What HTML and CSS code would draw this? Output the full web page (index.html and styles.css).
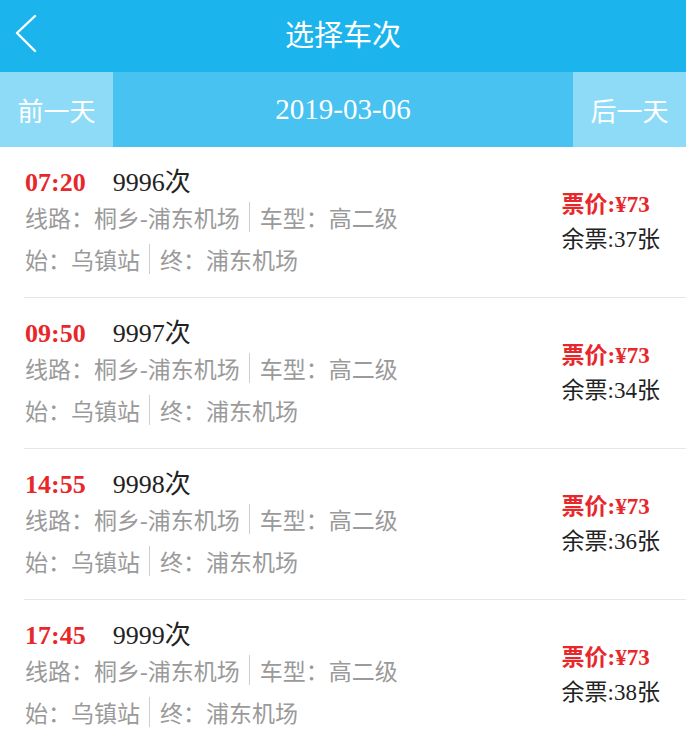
FILE: index.html
```html
<!DOCTYPE html>
<html lang="zh-CN">
<head>
    <meta charset="UTF-8">
    <meta name="viewport" content="width=device-width, initial-scale=1.0">
    <title>选择车次</title>
    <link rel="stylesheet" href="styles.css">
</head>
<body>
    <header class="topbar">
        <a class="back" href="#">
            <svg width="24" height="40" viewBox="0 0 24 40">
                <polyline points="20,1 2,18 20,36" fill="none" stroke="#fff" stroke-width="2.4" stroke-linecap="round" stroke-linejoin="round"/>
            </svg>
        </a>
        <h1 class="title">选择车次</h1>
    </header>

    <div class="datebar">
        <button class="day-btn">前一天</button>
        <div class="date">2019-03-06</div>
        <button class="day-btn">后一天</button>
    </div>

    <ul class="trips">
        <li class="trip">
            <div class="info">
                <div class="line-main"><span class="time">07:20</span><span class="no">9996次</span></div>
                <div class="line-sub">线路：桐乡-浦东机场<i class="sep"></i>车型：高二级</div>
                <div class="line-sub line-last">始：乌镇站<i class="sep"></i>终：浦东机场</div>
            </div>
            <div class="tickets">
                <div class="price">票价:¥73</div>
                <div class="left">余票:37张</div>
            </div>
        </li>
        <li class="trip">
            <div class="info">
                <div class="line-main"><span class="time">09:50</span><span class="no">9997次</span></div>
                <div class="line-sub">线路：桐乡-浦东机场<i class="sep"></i>车型：高二级</div>
                <div class="line-sub line-last">始：乌镇站<i class="sep"></i>终：浦东机场</div>
            </div>
            <div class="tickets">
                <div class="price">票价:¥73</div>
                <div class="left">余票:34张</div>
            </div>
        </li>
        <li class="trip">
            <div class="info">
                <div class="line-main"><span class="time">14:55</span><span class="no">9998次</span></div>
                <div class="line-sub">线路：桐乡-浦东机场<i class="sep"></i>车型：高二级</div>
                <div class="line-sub line-last">始：乌镇站<i class="sep"></i>终：浦东机场</div>
            </div>
            <div class="tickets">
                <div class="price">票价:¥73</div>
                <div class="left">余票:36张</div>
            </div>
        </li>
        <li class="trip">
            <div class="info">
                <div class="line-main"><span class="time">17:45</span><span class="no">9999次</span></div>
                <div class="line-sub">线路：桐乡-浦东机场<i class="sep"></i>车型：高二级</div>
                <div class="line-sub line-last">始：乌镇站<i class="sep"></i>终：浦东机场</div>
            </div>
            <div class="tickets">
                <div class="price">票价:¥73</div>
                <div class="left">余票:38张</div>
            </div>
        </li>
    </ul>
</body>
</html>
```

FILE: styles.css
```css
body {
    margin: 0;
    background: #eeeeee;
    font-family: "Liberation Serif", "Noto Sans CJK SC", serif;
    color: #222;
}

.topbar {
    position: relative;
    height: 72px;
    background: #1bb4ec;
    display: flex;
    align-items: center;
    justify-content: center;
}

.back {
    position: absolute;
    left: 15px;
    top: 15px;
    display: block;
    width: 24px;
    height: 40px;
}

.title {
    margin: 0;
    font-size: 29px;
    font-weight: normal;
    color: #fff;
    line-height: 72px;
}

.datebar {
    display: flex;
    height: 75px;
    background: #47c2f1;
}

.day-btn {
    width: 113px;
    border: none;
    padding: 0;
    background: #8edbf7;
    color: #fff;
    font-family: inherit;
    font-size: 26px;
    cursor: pointer;
}

.date {
    flex: 1;
    text-align: center;
    line-height: 74px;
    font-size: 29px;
    color: #fff;
}

.trips {
    list-style: none;
    margin: 0;
    padding: 0;
    background: #fff;
}

.trip {
    display: flex;
    align-items: center;
    height: 150px;
    margin-left: 24px;
    padding-left: 1px;
    border-bottom: 1px solid #e6e6e6;
}

.info {
    flex: 1;
    align-self: flex-start;
    padding-top: 18px;
}

.line-main {
    height: 36px;
    line-height: 36px;
    font-size: 26px;
}

.time {
    color: #e8272b;
    font-weight: bold;
    margin-right: 27px;
}

.no {
    color: #222;
}

.line-sub {
    display: flex;
    align-items: center;
    height: 36px;
    margin-top: -2px;
    margin-bottom: 2px;
    font-size: 23px;
    color: #9a9a9a;
    white-space: nowrap;
}

.line-last {
    margin-top: 6px;
}

.sep {
    display: inline-block;
    width: 1px;
    height: 30px;
    margin: 0 10px 0 9px;
    background: #cfcfcf;
}

.tickets {
    padding-right: 26px;
    font-size: 23px;
    line-height: 35px;
    white-space: nowrap;
}

.price {
    color: #e8272b;
    font-weight: bold;
}

.left {
    color: #222;
}
```
